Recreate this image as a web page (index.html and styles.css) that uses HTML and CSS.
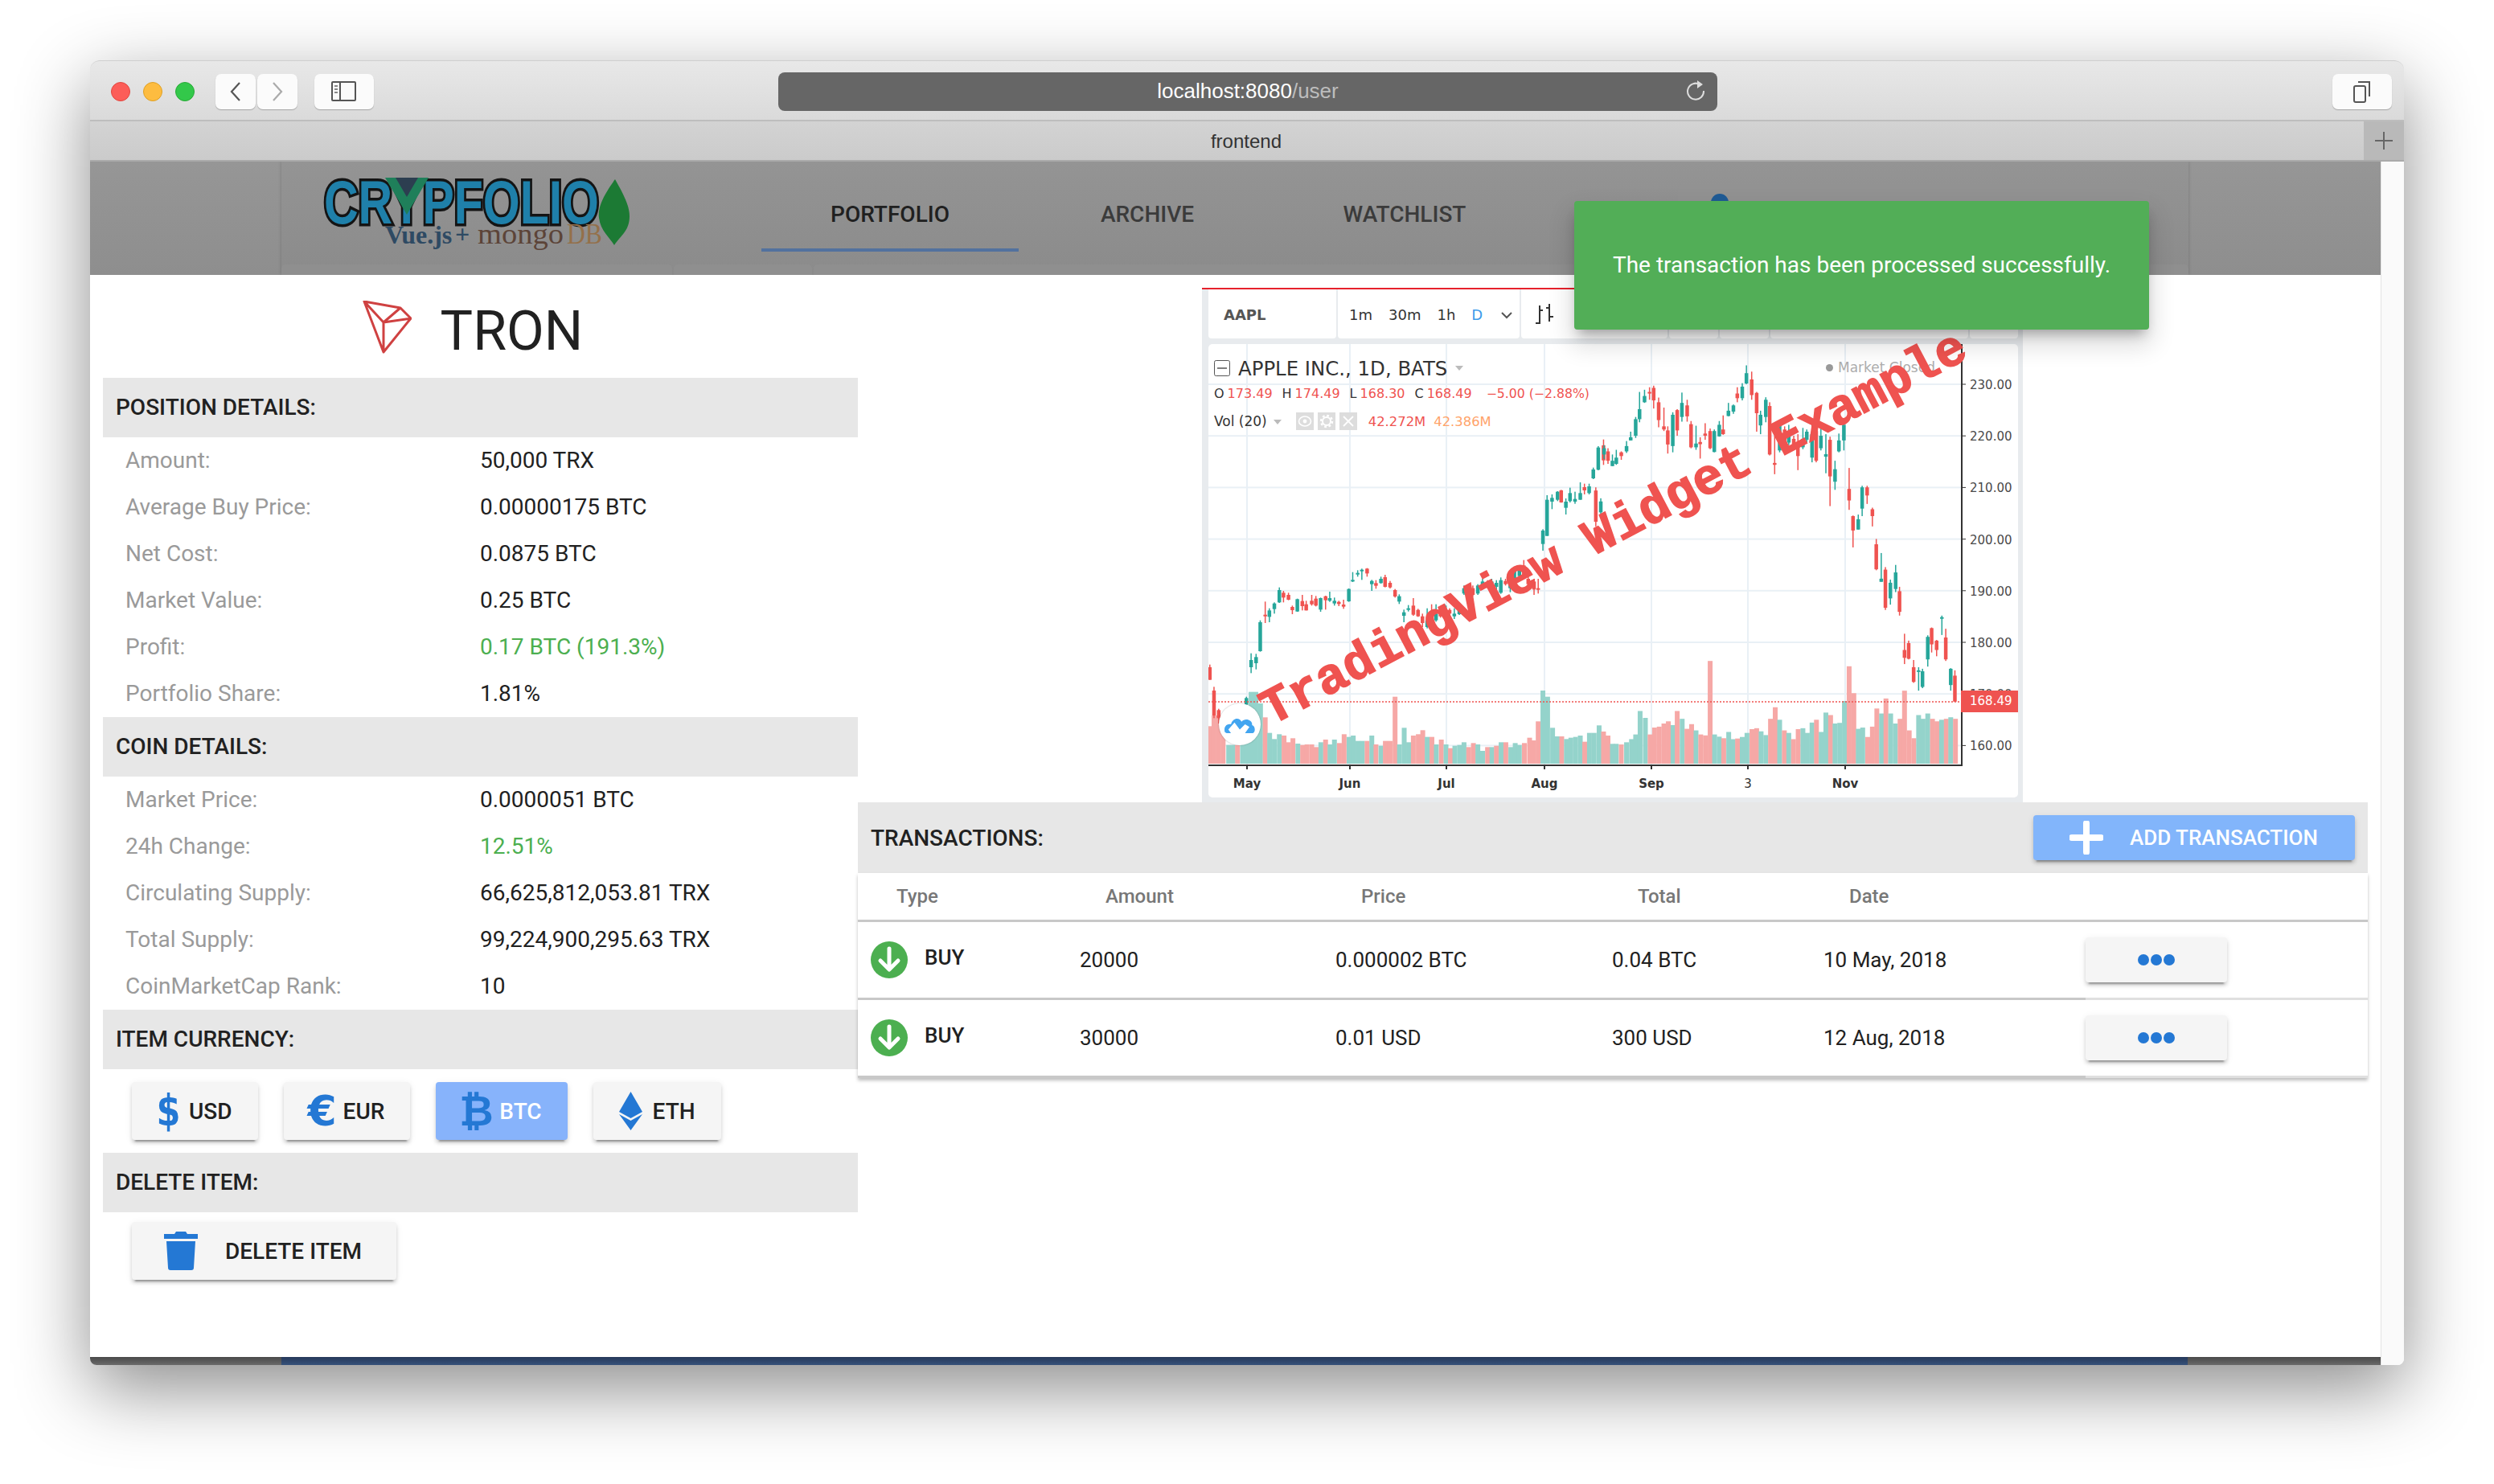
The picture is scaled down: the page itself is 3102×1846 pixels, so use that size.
FILE: index.html
```html
<!DOCTYPE html>
<html lang="en">
<head>
  <meta charset="UTF-8">
  <title>frontend</title>
  <link rel="stylesheet" href="styles.css">
</head>
<body>

<div class="window">
  <!-- safari chrome -->
  <div class="titlebar">
    <div class="lights">
      <span class="light red"></span>
      <span class="light yellow"></span>
      <span class="light green"></span>
    </div>
    <div class="tool-pair">
      <div class="tool nav-tool">
        <svg width="18" height="26" viewBox="0 0 18 26"><path d="M14 2 L4 13 L14 24" fill="none" stroke="#555" stroke-width="2.2"/></svg>
      </div>
      <div class="tool nav-tool">
        <svg width="18" height="26" viewBox="0 0 18 26"><path d="M4 2 L14 13 L4 24" fill="none" stroke="#aaa" stroke-width="2.2"/></svg>
      </div>
    </div>
    <div class="tool side-tool">
      <svg width="32" height="26" viewBox="0 0 32 26"><rect x="1" y="1" width="29" height="23" rx="1" fill="none" stroke="#555" stroke-width="2"/><path d="M11 1 V24" stroke="#555" stroke-width="2"/><path d="M4 6 H8 M4 10 H8 M4 14 H8" stroke="#888" stroke-width="2"/></svg>
    </div>
    <div class="urlbar">
      <span class="url"><span class="url-host">localhost:8080</span>/user</span>
      <svg class="reload" width="26" height="28" viewBox="0 0 26 28"><path d="M17 6 A10 10 0 1 0 22 14" fill="none" stroke="#ddd" stroke-width="2"/><path d="M14 1 L21 6 L14 11 Z" fill="#ddd"/></svg>
    </div>
    <div class="tool tabs-tool">
      <svg width="28" height="28" viewBox="0 0 28 28"><rect x="4" y="7" width="14" height="20" rx="2" fill="none" stroke="#555" stroke-width="2"/><path d="M9 2 H23 V20" fill="none" stroke="#555" stroke-width="2"/></svg>
    </div>
  </div>
  <div class="tabbar">
    <span class="tab-title">frontend</span>
    <div class="new-tab">
      <svg width="24" height="24" viewBox="0 0 24 24"><path d="M12 1 V23 M1 12 H23" stroke="#666" stroke-width="2"/></svg>
    </div>
  </div>

  <div class="viewport">
    <div class="app">
      <!-- dimmed app header behind the modal -->
      <div class="app-head">
        <div class="app-card">
          <div class="app-top">
            <svg class="logo" width="392" height="90" viewBox="0 0 392 90">
              <text class="logo-name" x="3" y="57" textLength="342" lengthAdjust="spacingAndGlyphs">CRYPFOLIO</text>
              <path d="M79 0 L133 0 L106 46 Z" fill="#1f7f5a"/>
              <path d="M92 0 L120 0 L106 24 Z" fill="#2c3e50"/>
              <path d="M365 2 C352 20 343 36 345 50 C347 66 358 74 364 84 C372 72 383 66 383 48 C383 34 374 18 365 2 Z" fill="#1c7a34"/>
              <text class="logo-vue" x="79" y="82">Vue.js</text>
              <text class="logo-vue" x="166" y="81">+</text>
              <text class="logo-mongo" x="194" y="82" textLength="107" lengthAdjust="spacingAndGlyphs">mongo</text>
              <text class="logo-db" x="305" y="82" textLength="44" lengthAdjust="spacingAndGlyphs">DB</text>
            </svg>
            <div class="app-nav">
              <div class="app-tab active">PORTFOLIO</div>
              <div class="app-tab">ARCHIVE</div>
              <div class="app-tab">WATCHLIST</div>
            </div>
            <div class="app-account"><span class="account-dot"></span></div>
          </div>
          <div class="app-under">
            <div class="under-card wide"></div>
            <div class="under-card"></div>
            <div class="under-card grow"></div>
          </div>
        </div>
      </div>

      <!-- item modal -->
      <div class="modal">
        <div class="item-col">
          <div class="coin-title">
            <svg class="tron-logo" width="62" height="66" viewBox="0 0 62 66"><path d="M3 1 L48 9 L61 22 L27 64 Z M3 1 L27 27 L27 64 M27 27 L61 22 M27 27 L48 9" fill="none" stroke="#cf4141" stroke-width="3" stroke-linejoin="round"/></svg>
            <span>TRON</span>
          </div>

          <div class="section-head">POSITION DETAILS:</div>
          <div class="info-row"><span class="info-label">Amount:</span><span>50,000 TRX</span></div>
          <div class="info-row"><span class="info-label">Average Buy Price:</span><span>0.00000175 BTC</span></div>
          <div class="info-row"><span class="info-label">Net Cost:</span><span>0.0875 BTC</span></div>
          <div class="info-row"><span class="info-label">Market Value:</span><span>0.25 BTC</span></div>
          <div class="info-row"><span class="info-label">Profit:</span><span class="gain">0.17 BTC (191.3%)</span></div>
          <div class="info-row"><span class="info-label">Portfolio Share:</span><span>1.81%</span></div>

          <div class="section-head">COIN DETAILS:</div>
          <div class="info-row"><span class="info-label">Market Price:</span><span>0.0000051 BTC</span></div>
          <div class="info-row"><span class="info-label">24h Change:</span><span class="gain">12.51%</span></div>
          <div class="info-row"><span class="info-label">Circulating Supply:</span><span>66,625,812,053.81 TRX</span></div>
          <div class="info-row"><span class="info-label">Total Supply:</span><span>99,224,900,295.63 TRX</span></div>
          <div class="info-row"><span class="info-label">CoinMarketCap Rank:</span><span>10</span></div>

          <div class="section-head">ITEM CURRENCY:</div>
          <div class="currency-row">
            <button class="btn"><span class="coin-icon usd">$</span>USD</button>
            <button class="btn"><span class="coin-icon eur">€</span>EUR</button>
            <button class="btn active"><span class="coin-icon btc">₿</span>BTC</button>
            <button class="btn">
              <svg class="eth" width="29" height="48" viewBox="0 0 29 48"><path d="M14.5 0 L29 25 L14.5 33 L0 25 Z M0 28 L14.5 36 L29 28 L14.5 48 Z" fill="#2478d4"/></svg>ETH
            </button>
          </div>

          <div class="section-head">DELETE ITEM:</div>
          <div class="delete-row">
            <button class="btn delete-btn">
              <svg width="42" height="48" viewBox="0 0 42 48"><path d="M15 0 H27 L29 3 H42 V9 H0 V3 H13 Z" fill="#2478d4"/><path d="M3 12 H39 L37 45 Q37 48 34 48 H8 Q5 48 5 45 Z" fill="#2478d4"/></svg>
              DELETE ITEM
            </button>
          </div>
        </div>

        <div class="trade-col">
          <div class="chart-wrap">
            <div class="tv-toolbar">
              <div class="tv-group tv-symbol">AAPL</div>
              <div class="tv-group tv-times">
                <span>1m</span><span>30m</span><span>1h</span><span class="tv-current">D</span>
                <svg width="16" height="10" viewBox="0 0 16 10"><path d="M2 2 L8 8 L14 2" fill="none" stroke="#555" stroke-width="2"/></svg>
              </div>
              <div class="tv-group tv-style">
                <svg width="24" height="28" viewBox="0 0 24 28"><path d="M6 3 V26 M1 25 H6 M6 9 H10 M18 1 V23 M14 6 H18 M18 17 H23" fill="none" stroke="#333" stroke-width="2"/></svg>
                <span class="style-active"></span>
              </div>
              <div class="tv-group tv-blank"></div>
              <div class="tv-group tv-blank"></div>
              <div class="tv-group tv-fill"></div>
              <div class="tv-group tv-last"></div>
            </div>
            <div class="tv-panel">
              <svg id="chart" width="1007" height="564" viewBox="0 0 1007 564"></svg>

              <div class="tv-legend">
                <div class="legend-title">
                  <svg width="20" height="20" viewBox="0 0 20 20"><rect x="0.5" y="0.5" width="19" height="19" rx="2" fill="none" stroke="#555"/><path d="M4 10 H16" stroke="#555" stroke-width="1.5"/></svg>
                  <span>APPLE INC., 1D, BATS</span>
                  <span class="caret"></span>
                </div>
                <div class="legend-ohlc">
                  <span>O<em>173.49</em></span>
                  <span>H<em>174.49</em></span>
                  <span>L<em>168.30</em></span>
                  <span>C<em>168.49</em></span>
                  <span class="legend-change"><em>−5.00 (−2.88%)</em></span>
                </div>
                <div class="legend-vol">
                  <span>Vol (20)</span>
                  <span class="caret small"></span>
                  <span class="vol-tools">
                    <span class="vol-tool">
                      <svg width="22" height="22" viewBox="0 0 22 22"><ellipse cx="11" cy="11" rx="7.5" ry="6" fill="none" stroke="#fff" stroke-width="1.6"/><circle cx="11" cy="11" r="2.4" fill="#fff"/></svg>
                    </span>
                    <span class="vol-tool">
                      <svg width="22" height="22" viewBox="0 0 22 22"><circle cx="11" cy="11" r="5" fill="none" stroke="#fff" stroke-width="2"/><circle cx="11" cy="11" r="7" fill="none" stroke="#fff" stroke-width="2.4" stroke-dasharray="2.8 2.7"/></svg>
                    </span>
                    <span class="vol-tool">
                      <svg width="22" height="22" viewBox="0 0 22 22"><path d="M5 5 L17 17 M17 5 L5 17" stroke="#fff" stroke-width="1.8"/></svg>
                    </span>
                  </span>
                  <em>42.272M</em>
                  <em class="orange">42.386M</em>
                </div>
              </div>

              <div class="market-state"><span class="state-dot"></span>Market Closed</div>
              <div class="price-tag">168.49</div>
              <div class="watermark">TradingView Widget Example</div>
              <div class="tv-badge">
                <svg width="40" height="24" viewBox="0 0 36 22"><path d="M1 20 C-1 13 4 10 8 11 C10 3 18 3 20 8 C24 3 33 6 32 12 C36 13 36 20 33 21 L24 21 L29 14 L24 11 L18 17 L12 9 L5 17 L8 21 L3 21 Z" fill="#42a5f0"/></svg>
              </div>
            </div>
          </div>

          <div class="section-head trade-head">
            <span>TRANSACTIONS:</span>
            <button class="btn add-btn">
              <svg width="42" height="42" viewBox="0 0 42 42"><path d="M21 3 V39 M3 21 H39" stroke="#fff" stroke-width="8" stroke-linecap="round"/></svg>
              ADD TRANSACTION
            </button>
          </div>

          <table class="trade-table">
            <colgroup>
              <col class="col-type"><col class="col-amount"><col class="col-price"><col class="col-total"><col class="col-date"><col>
            </colgroup>
            <thead>
              <tr>
                <th class="th-type">Type</th>
                <th>Amount</th>
                <th>Price</th>
                <th>Total</th>
                <th>Date</th>
                <th></th>
              </tr>
            </thead>
            <tbody>
              <tr>
                <td>
                  <div class="type-cell">
                    <svg width="46" height="46" viewBox="0 0 46 46"><circle cx="23" cy="23" r="23" fill="#4caf50"/><path d="M23 9 V33 M12 24 L23 35 L34 24" fill="none" stroke="#fff" stroke-width="5" stroke-linecap="round" stroke-linejoin="round"/></svg>
                    <span class="type-name">BUY</span>
                  </div>
                </td>
                <td>20000</td>
                <td>0.000002 BTC</td>
                <td>0.04 BTC</td>
                <td>10 May, 2018</td>
                <td><button class="btn more-btn"><i></i><i></i><i></i></button></td>
              </tr>
              <tr>
                <td>
                  <div class="type-cell">
                    <svg width="46" height="46" viewBox="0 0 46 46"><circle cx="23" cy="23" r="23" fill="#4caf50"/><path d="M23 9 V33 M12 24 L23 35 L34 24" fill="none" stroke="#fff" stroke-width="5" stroke-linecap="round" stroke-linejoin="round"/></svg>
                    <span class="type-name">BUY</span>
                  </div>
                </td>
                <td>30000</td>
                <td>0.01 USD</td>
                <td>300 USD</td>
                <td>12 Aug, 2018</td>
                <td><button class="btn more-btn"><i></i><i></i><i></i></button></td>
              </tr>
            </tbody>
          </table>
        </div>
      </div>

      <div class="app-foot"><div class="foot-blue"></div></div>
    </div>
    <div class="scrollbar"></div>
  </div>

  <div class="toast">The transaction has been processed successfully.</div>
</div>

<script src="chart.js"></script>
</body>
</html>
```

FILE: styles.css
```css
* {
  box-sizing: border-box;
}
html, body {
  height: 100%;
}
body {
  margin: 0;
  padding: 75px 0 0 112px;
  background-color: #fff;
  font-family: Roboto, "Liberation Sans", sans-serif;
  font-size: 28px;
  color: #212121;
  overflow: hidden;
}

/* browser window */
.window {
  position: relative;
  width: 2878px;
  height: 1623px;
  display: flex;
  flex-direction: column;
  border-radius: 12px 12px 8px 8px;
  box-shadow: 0 30px 90px rgba(0, 0, 0, 0.45);
}
.titlebar {
  position: relative;
  height: 76px;
  display: flex;
  align-items: center;
  padding: 2px 0 0 26px;
  background: linear-gradient(#e8e8e8, #dadada);
  border-top: 1px solid #cfcfcf;
  border-bottom: 2px solid #bdbdbd;
  border-radius: 12px 12px 0 0;
}
.lights {
  display: flex;
  gap: 16px;
  margin-right: 26px;
}
.light {
  width: 24px;
  height: 24px;
  border-radius: 50%;
}
.light.red { background-color: #fc5d58; border: 1px solid #e2463f; }
.light.yellow { background-color: #fdbc40; border: 1px solid #dfa023; }
.light.green { background-color: #33c84a; border: 1px solid #27aa35; }
.tool {
  height: 44px;
  display: flex;
  align-items: center;
  justify-content: center;
  background-color: #fbfbfb;
  border-radius: 7px;
  box-shadow: 0 1px 1px rgba(0, 0, 0, 0.25);
}
.tool-pair {
  display: flex;
  gap: 2px;
}
.nav-tool {
  width: 50px;
}
.side-tool {
  width: 74px;
  margin-left: 21px;
}
.urlbar {
  position: relative;
  width: 1168px;
  height: 48px;
  margin-left: 503px;
  display: flex;
  align-items: center;
  justify-content: center;
  background-color: #666;
  border-radius: 8px;
  font-family: "Liberation Sans", Arial, sans-serif;
  font-size: 26px;
  color: #bdbdbd;
}
.url-host {
  color: #fff;
}
.reload {
  position: absolute;
  right: 13px;
  top: 9px;
}
.tabs-tool {
  width: 74px;
  margin-left: 765px;
}
.tabbar {
  position: relative;
  height: 50px;
  display: flex;
  align-items: center;
  justify-content: center;
  padding-top: 1px;
  background: linear-gradient(#d3d3d3, #cbcbcb);
  border-bottom: 2px solid #aaa;
  font-family: "Liberation Sans", Arial, sans-serif;
  font-size: 24px;
  color: #333;
}
.tab-title {
  margin-right: 2px;
}
.new-tab {
  position: absolute;
  right: 0;
  top: 0;
  width: 50px;
  height: 48px;
  display: flex;
  align-items: center;
  justify-content: center;
  background-color: #b9b9b9;
}

.viewport {
  flex: 1;
  min-height: 0;
  display: flex;
}
.app {
  width: 2849px;
  display: flex;
  flex-direction: column;
}
.scrollbar {
  flex: 1;
  background-color: #fafafa;
  border-left: 1px solid #e4e4e4;
  border-bottom-right-radius: 8px;
}

/* dimmed app behind modal */
.app-head {
  height: 141px;
  padding: 0 239px 0 238px;
  background: linear-gradient(#969696, #8e8e8e);
}
.app-card {
  height: 141px;
  background: linear-gradient(#949494, #8b8b8b);
  box-shadow: 0 0 4px rgba(0, 0, 0, 0.2);
}
.app-top {
  height: 128px;
  display: flex;
}
.logo {
  margin: 20px 0 0 50px;
}
.logo-name {
  font-family: "Liberation Sans", Arial, sans-serif;
  font-weight: 700;
  font-size: 76px;
  fill: #1f80aa;
  stroke: #141414;
  stroke-width: 7px;
  paint-order: stroke;
}
.logo-vue, .logo-mongo, .logo-db {
  font-family: "Liberation Serif", serif;
}
.logo-vue {
  font-weight: 700;
  font-size: 32px;
  fill: #2e4a63;
}
.logo-mongo {
  font-size: 36px;
  fill: #5c4438;
}
.logo-db {
  font-size: 36px;
  fill: #94704a;
}
.app-nav {
  display: flex;
  margin-left: 155px;
}
.app-tab {
  width: 320px;
  height: 112px;
  padding-top: 49px;
  text-align: center;
  font-weight: 500;
  color: #3b3b3b;
}
.app-tab.active {
  color: #202020;
  border-bottom: 4px solid #52719e;
}
.app-account {
  width: 586px;
  margin: 28px 0 0 180px;
  padding: 12px 0 0 41px;
  background-color: #929292;
  border-radius: 6px 6px 0 0;
}
.account-dot {
  display: block;
  width: 22px;
  height: 22px;
  border-radius: 50%;
  background-color: #1f5b95;
}
.app-under {
  display: flex;
  gap: 2px;
}
.under-card {
  width: 172px;
  height: 13px;
  background-color: #8f8f8f;
  border-radius: 5px 5px 0 0;
}
.under-card.wide {
  width: 486px;
}
.under-card.grow {
  flex: 1;
}

/* modal */
.modal {
  flex: 1;
  min-height: 0;
  display: flex;
  padding: 0 16px;
  background-color: #fff;
  border-radius: 6px 6px 0 0;
}
.item-col {
  width: 939px;
}
.coin-title {
  height: 128px;
  display: flex;
  align-items: center;
  justify-content: center;
  gap: 36px;
  padding: 12px 20px 0 0;
  font-size: 68px;
  line-height: 1;
}
.tron-logo {
  margin-top: -10px;
}
.section-head {
  height: 74px;
  display: flex;
  align-items: center;
  padding: 0 0 2px 16px;
  background-color: #e7e7e7;
  font-weight: 500;
}
.info-row {
  height: 58px;
  display: flex;
  align-items: center;
  padding: 0 0 2px 28px;
}
.info-label {
  width: 441px;
  color: #9a9a9a;
}
.gain {
  color: #4caf50;
}
.btn {
  height: 72px;
  display: flex;
  align-items: center;
  padding: 0 32px;
  border: 0;
  border-radius: 4px;
  background-color: #f5f5f5;
  font-family: inherit;
  font-size: 28px;
  font-weight: 500;
  color: #212121;
  box-shadow: 0 6px 2px -4px rgba(0, 0, 0, 0.3), 0 4px 4px rgba(0, 0, 0, 0.14), 0 2px 10px rgba(0, 0, 0, 0.08);
}
.btn.active {
  background-color: #87b3fb;
  color: #fff;
}
.currency-row {
  display: flex;
  gap: 32px;
  padding: 16px 36px;
}
.coin-icon {
  margin-right: 12px;
  font-family: "DejaVu Sans", sans-serif;
  font-weight: 700;
  font-size: 52px;
  line-height: 1;
  color: #2478d4;
}
.coin-icon.usd {
  width: 27px;
  font-size: 54px;
  text-align: center;
  transform: scaleX(0.8);
  display: flex;
  justify-content: center;
}
.coin-icon.eur {
  width: 32px;
  margin-right: 10px;
  display: flex;
  justify-content: center;
}
.coin-icon.btc {
  width: 36px;
  margin-right: 11px;
  display: flex;
  justify-content: center;
}
.eth {
  margin-right: 13px;
}
.delete-row {
  display: flex;
  padding: 12px 36px;
}
.delete-btn {
  padding: 0 43px 0 40px;
}
.delete-btn svg {
  margin-right: 34px;
}

/* chart + transactions */
.trade-col {
  flex: 1;
  min-width: 0;
}
.chart-wrap {
  width: 1021px;
  height: 640px;
  margin: 16px 0 0 428px;
  padding: 0 6px 6px 8px;
  background-color: #e8ebee;
  border-top: 2px solid #e6212c;
}
.tv-toolbar {
  height: 61px;
  display: flex;
  gap: 2px;
  font-family: "DejaVu Sans", sans-serif;
  font-size: 18px;
}
.tv-group {
  display: flex;
  align-items: center;
  height: 61px;
  background-color: #fff;
  border-radius: 0 0 4px 4px;
}
.tv-symbol {
  width: 159px;
  padding: 2px 0 0 19px;
  font-weight: 700;
  color: #555;
}
.tv-times {
  width: 226px;
  padding: 2px 0 0 14px;
  gap: 20px;
  color: #333;
}
.tv-current {
  color: #3d9bea;
}
.tv-times svg {
  margin-left: 2px;
}
.tv-style {
  width: 182px;
  padding-left: 17px;
}
.style-active {
  width: 3px;
  height: 16px;
  margin: 2px 0 0 25px;
  background-color: #3d9bea;
}
.tv-blank {
  width: 61px;
}
.tv-fill {
  flex: 1;
}
.tv-last {
  width: 60px;
}
.tv-panel {
  position: relative;
  width: 1007px;
  height: 564px;
  margin-top: 7px;
  background-color: #fff;
  border-radius: 5px;
  font-family: "DejaVu Sans", sans-serif;
}
#chart {
  display: block;
}
.tv-legend {
  position: absolute;
  left: 7px;
  top: 18px;
  color: #333;
}
.tv-legend em {
  font-style: normal;
  color: #ef5350;
}
.legend-title {
  display: flex;
  align-items: center;
  gap: 10px;
  height: 24px;
  font-size: 24.4px;
}
.caret {
  width: 0;
  height: 0;
  border: 5px solid transparent;
  border-top: 6px solid #bbb;
  border-bottom: 0;
}
.legend-ohlc {
  display: flex;
  gap: 12px;
  margin-top: 10px;
  height: 20px;
  font-size: 16px;
  line-height: 20px;
}
.legend-ohlc em {
  margin-left: 4px;
}
.legend-change {
  margin-left: 6px;
}
.legend-change em {
  margin-left: 0;
  font-size: 15.7px;
}
.legend-vol {
  display: flex;
  align-items: center;
  height: 24px;
  margin-top: 12px;
  font-size: 17px;
}
.legend-vol em {
  margin-left: 10px;
  font-size: 16.4px;
}
.legend-vol .orange {
  color: #ffa36a;
}
.caret.small {
  margin: 2px 0 0 8px;
}
.vol-tools {
  display: flex;
  gap: 5px;
  margin: 0 4px 0 18px;
}
.vol-tool {
  width: 22px;
  height: 22px;
  background-color: #ddd;
}
.vol-tool svg {
  display: block;
}
.market-state {
  position: absolute;
  left: 768px;
  top: 20px;
  display: flex;
  align-items: center;
  gap: 6px;
  font-size: 17px;
  line-height: 18px;
  color: #adadad;
}
.state-dot {
  width: 9px;
  height: 9px;
  border-radius: 50%;
  background-color: #999;
}
.price-tag {
  position: absolute;
  left: 936px;
  top: 431px;
  width: 71px;
  height: 27px;
  padding-left: 11px;
  background-color: #ef5350;
  color: #fff;
  font-size: 15px;
  line-height: 27px;
}
.watermark {
  position: absolute;
  left: 505px;
  top: 231px;
  transform: translate(-50%, -50%) rotate(-27.8deg);
  font-family: "Liberation Mono", monospace;
  font-weight: 700;
  font-size: 63px;
  white-space: nowrap;
  color: #ef5350;
  -webkit-text-stroke: 1.5px #ef5350;
}
.tv-badge {
  position: absolute;
  left: 13px;
  top: 447px;
  width: 52px;
  height: 52px;
  display: flex;
  align-items: center;
  justify-content: center;
  background-color: #fff;
  border-radius: 50%;
  box-shadow: 0 0 2px rgba(0, 0, 0, 0.3);
}

.trade-head {
  height: 88px;
  justify-content: space-between;
  padding: 0 16px 0 16px;
}
.add-btn {
  width: 400px;
  height: 56px;
  padding: 0 0 0 45px;
  background-color: #82b5fb;
  color: #fff;
  font-size: 26px;
}
.add-btn svg {
  margin-right: 33px;
}
.trade-table {
  width: 100%;
  table-layout: fixed;
  border-collapse: collapse;
  font-size: 26px;
  box-shadow: 0 3px 4px rgba(0, 0, 0, 0.25);
}
.col-type { width: 276px; }
.col-amount { width: 318px; }
.col-price { width: 344px; }
.col-total { width: 263px; }
.col-date { width: 326px; }
.trade-table th {
  height: 59px;
  padding: 0 0 0 32px;
  text-align: left;
  font-size: 24px;
  font-weight: 500;
  color: #777;
  border-bottom: 3px solid #c8c8c8;
}
.trade-table th.th-type {
  padding-left: 48px;
}
.trade-table td {
  height: 97px;
  padding: 0;
  border-bottom: 3px solid #c8c8c8;
}
.trade-table td:last-child {
  border-bottom-color: #e0e0e0;
}
.type-cell {
  display: flex;
  align-items: center;
  gap: 21px;
  padding-left: 16px;
}
.type-name {
  font-weight: 500;
  font-size: 26px;
  margin-top: -6px;
}
.more-btn {
  width: 176px;
  height: 56px;
  justify-content: center;
  gap: 2px;
  padding: 0;
}
.more-btn i {
  width: 14px;
  height: 14px;
  border-radius: 50%;
  background-color: #2478d4;
}

.app-foot {
  position: relative;
  height: 10px;
  padding-left: 238px;
  background: linear-gradient(#4a4a4a, #6a6a6a);
  border-radius: 0 0 0 8px;
}
.foot-blue {
  width: 2371px;
  height: 10px;
  background: linear-gradient(#26395a, #36517a);
}

.toast {
  position: absolute;
  left: 1846px;
  top: 175px;
  width: 715px;
  height: 160px;
  display: flex;
  align-items: center;
  justify-content: center;
  padding-bottom: 2px;
  background-color: #52ae57;
  color: #fff;
  border-radius: 4px;
  box-shadow: 0 10px 14px -6px rgba(0, 0, 0, 0.3), 0 16px 30px 4px rgba(0, 0, 0, 0.14);
}
```

FILE: chart.js
```js
// TradingView style chart, values read off the widget at its own scale
const svgNS = 'http://www.w3.org/2000/svg';
const chart = document.getElementById('chart');
const panelX = 1503;
const panelY = 428;

const UP = '#26a69a';
const DOWN = '#ef5350';
const g = 'g';
const r = 'r';

// x, body top, body bottom, wick top, wick bottom, colour
const candleSets = [
  { x0: 1480, sx: 2.904, y0: 660, sy: 3, rows: [
    [72,510,557,500,557,r],[87,597,690,583,700,r],[104,670,700,665,720,r],[204,625,650,620,660,g],
    [221,483,510,458,532,g],[239,472,495,460,518,g],[254,342,450,335,452,g],[272,314,320,265,345,r],
    [287,298,322,290,342,g],[305,272,293,268,310,g],[323,222,268,212,270,g],[338,232,250,225,268,r],
    [356,240,258,232,260,r],[370,285,297,280,312,r],[388,256,302,254,303,g],[406,263,282,240,298,r],
    [420,275,298,262,298,r],[440,262,275,240,280,r],[455,254,280,244,283,r],[472,252,295,250,303,g],
    [490,245,260,243,295,r],[505,252,262,228,266,g],[522,262,272,250,280,g],[538,266,274,262,282,r],
    [555,276,284,258,292,r],[574,218,264,216,266,g],[588,184,190,155,192,g],[606,158,163,148,172,g],
    [621,146,152,142,184,g],[640,142,160,140,172,r],[657,188,200,184,225,g],[672,196,206,185,217,r],
    [690,180,196,172,198,g],[705,174,210,165,212,r],[723,195,212,188,216,r],[741,222,246,218,250,r],
    [756,245,265,238,274,g],[773,305,318,295,342,g],[789,290,295,278,302,g],[807,280,314,252,318,r],
    [824,296,320,292,322,r],[840,320,345,310,360,r],[857,335,360,290,365,g],[873,300,330,275,335,r],
    [889,310,335,275,340,g],[905,290,320,285,325,r],[921,280,305,275,310,g],[938,296,310,290,315,r],
    [955,310,320,290,330,g],[973,290,312,285,315,g],[990,215,235,205,240,g],[1006,225,250,215,255,r],
    [1022,215,240,205,245,r],[1040,205,235,200,240,g],[1057,190,215,180,220,g],[1075,195,210,185,215,r],
    [1090,190,215,180,220,g],[1107,195,210,185,230,g],[1123,185,232,175,236,g],[1140,188,200,180,205,r],
    [1157,180,215,170,230,g],[1172,150,178,140,190,g],[1190,145,170,135,175,g],[1206,130,170,110,180,r],
    [1222,180,200,170,210,r],[1243,190,220,180,240,r],[1258,215,220,180,235,r]
  ]},
  { x0: 1480, sx: 2.904, y0: 350, sy: 3, rows: [
    [1275,930,980,925,1005,g],[1290,815,950,798,950,g],[1308,808,822,795,850,g],[1328,785,815,783,820,g],
    [1341,780,825,778,826,r],[1358,822,845,810,870,g],[1373,790,820,770,825,g],[1391,812,822,785,830,g],
    [1410,790,815,750,815,g],[1425,768,780,755,795,r],[1442,765,790,755,795,g],[1457,702,735,695,738,g],
    [1475,620,703,615,705,g],[1494,612,668,590,685,r]
  ]},
  { x0: 2000, sx: 2.904, y0: 400, sy: 2.57, rows: [
    [-44,540,640,530,655,r],[-26,575,610,565,615,g],[-14,405,425,395,440,g],[0,415,445,405,455,r],
    [16,445,462,425,462,g],[30,435,455,410,458,g],[48,418,430,415,442,r],[67,398,415,382,420,g],
    [82,370,380,352,380,g],[100,312,365,305,372,g],[114,280,312,225,322,g],[132,238,258,218,260,g],
    [150,225,228,210,250,r],[165,212,252,205,278,r],[183,258,315,243,338,r],[202,335,345,275,350,r],
    [216,348,393,335,422,r],[234,298,398,290,418,g],[250,283,348,280,365,r],[267,260,305,227,320,g],
    [286,268,303,250,320,r],[300,328,402,318,405,r],[318,390,402,333,410,g],[333,385,392,370,438,r],
    [351,358,365,325,378,r],[369,350,405,342,408,r],[384,350,417,345,418,g],[402,330,367,318,368,g],
    [416,345,360,300,362,r],[435,285,302,260,303,g],[453,268,288,265,295,g],[467,230,245,210,258,r],
    [485,208,245,197,252,g],[500,165,198,140,200,g],[519,185,235,160,250,r],[537,228,293,225,352,r],
    [551,298,332,285,360,g],[570,250,305,242,322,g],[584,270,425,258,428,r],[602,452,458,365,488,r],
    [620,330,412,320,418,g],[638,345,380,335,390,r],[653,360,387,330,395,g],[671,375,395,365,400,r],
    [686,400,430,360,475,r],[704,375,402,340,408,g],[718,352,378,345,385,g],[737,360,435,310,450,g],
    [752,350,445,345,450,r],[769,365,405,335,412,g],[787,424,432,360,485,g],[802,378,495,368,590,r],
    [820,472,512,445,538,g],[834,380,415,358,418,g],[852,330,380,320,412,g],[871,535,572,468,602,r],
    [885,622,668,620,722,r],[904,632,665,617,665,g],[918,530,598,525,622,g],[936,530,556,525,583,r],
    [955,600,622,595,655,r],[969,712,792,695,795,r],[987,822,832,740,832,g],[1002,793,915,785,922,r],
    [1020,835,885,825,905,g],[1039,802,855,778,865,g],[1053,862,928,848,940,r],[1071,1050,1075,998,1095,r],
    [1086,1028,1078,1020,1080,r],[1104,1105,1152,1082,1155,r],[1122,1115,1120,1105,1180,g],[1136,1118,1168,1110,1172,g],
    [1155,1008,1080,1003,1103,g],[1169,980,1032,978,1058,r],[1187,1020,1050,1018,1070,r],[1206,945,950,940,1002,g],
    [1220,1010,1080,982,1085,r],[1238,1110,1162,1108,1180,g],[1253,1132,1215,1115,1215,r]
  ]}
];

// x, top of the bar, colour
const volumeSets = [
  { x0: 1480, sx: 2.904, y0: 660, sy: 3, rows: [
    [72,730,r],[87,690,r],[104,690,r],[120,730,r],[140,800,g],[156,800,g],[172,800,r],[190,760,g],[206,700,g],[221,602,g],
    [238,602,g],[255,645,g],[272,697,r],[288,755,g],[305,778,g],[323,760,g],[340,765,r],[355,790,r],[372,775,r],[390,795,g],
    [407,800,r],[423,798,r],[440,798,r],[456,808,r],[473,790,g],[490,780,r],[506,798,g],[522,780,g],[540,793,r],[557,760,r],
    [575,770,g],[590,765,g],[607,785,g],[623,785,g],[640,785,r],[657,765,g],[672,798,r],[690,803,g],[706,785,r],[723,785,r],
    [741,620,r],[757,798,g],[774,736,g],[790,790,g],[807,765,r],[825,760,r],[841,745,r],[857,770,g],[874,770,r],[890,798,g],
    [908,780,r],[925,798,g],[941,812,r],[957,803,g],[974,800,g],[990,790,g],[1007,808,r],[1024,793,r],[1040,798,g],[1057,822,g],
    [1075,808,r],[1091,808,g],[1107,803,r],[1124,790,g],[1141,790,r],[1159,808,g],[1175,793,g],[1190,800,g],[1208,793,r],[1227,773,r],
    [1242,783,r],[1258,712,r],[1275,597,g],[1292,620,g],[1310,736,g],[1327,768,g],[1343,768,r],[1360,778,g],[1376,773,g],[1393,770,g],
    [1410,765,g],[1426,788,r],[1443,755,g],[1460,755,g],[1478,727,g],[1494,750,r],[1510,765,r]
  ]},
  { x0: 2000, sx: 2.904, y0: 400, sy: 2.57, rows: [
    [0,1325,r],[16,1350,g],[30,1350,g],[48,1352,r],[67,1345,g],[85,1335,g],[100,1320,g],[116,1245,g],[135,1267,g],[152,1320,r],
    [168,1298,r],[185,1295,r],[202,1285,r],[218,1278,r],[235,1290,g],[250,1245,r],[268,1270,g],[285,1302,r],[302,1287,r],[318,1307,g],
    [335,1320,r],[352,1323,r],[369,1085,r],[385,1320,g],[402,1327,g],[418,1332,r],[436,1312,g],[452,1335,g],[468,1333,r],[485,1328,g],
    [502,1315,g],[520,1303,r],[537,1300,r],[553,1310,g],[570,1322,g],[587,1270,r],[604,1233,r],[620,1273,g],[637,1307,r],[653,1315,g],
    [670,1335,r],[687,1303,r],[704,1300,g],[720,1315,g],[737,1282,g],[753,1273,r],[770,1312,g],[787,1250,g],[804,1258,r],[820,1285,g],
    [837,1283,g],[854,1213,g],[871,1102,r],[888,1188,r],[904,1302,g],[920,1298,g],[938,1328,r],[955,1295,r],[971,1237,r],[988,1253,g],
    [1004,1205,r],[1021,1253,g],[1038,1285,g],[1055,1270,r],[1071,1180,r],[1088,1307,r],[1105,1332,r],[1122,1258,g],[1138,1270,g],[1155,1253,g],
    [1172,1270,r],[1188,1278,r],[1205,1273,g],[1222,1270,r],[1238,1265,g],[1255,1270,r]
  ]}
];

const gridX = [1551, 1679, 1799, 1921, 2054, 2174, 2295];
const months = ['May', 'Jun', 'Jul', 'Aug', 'Sep', '3', 'Nov'];
const prices = [230, 220, 210, 200, 190, 180, 170, 160];

const axisX = 2439 - panelX;
const axisY = 952 - panelY;
const baseY = 950 - panelY;

function add(tag, attrs, text) {
  const el = document.createElementNS(svgNS, tag);
  for (const key in attrs) {
    el.setAttribute(key, attrs[key]);
  }
  if (text) el.textContent = text;
  chart.appendChild(el);
  return el;
}

function priceY(p) {
  return 478 + (230 - p) * 6.42 - panelY;
}

function drawGrid() {
  prices.forEach(p => {
    const y = priceY(p);
    add('rect', { x: 0, y: y - 1, width: axisX, height: 2, fill: '#e9f0f6' });
  });
  gridX.forEach(x => {
    add('rect', { x: x - panelX - 1, y: 0, width: 2, height: axisY, fill: '#e9f0f6' });
  });
}

function drawVolumes() {
  volumeSets.forEach(set => {
    set.rows.forEach(row => {
      const x = set.x0 + row[0] / set.sx - panelX;
      const top = set.y0 + row[1] / set.sy - panelY;
      add('rect', {
        x: x - 3, y: top, width: 6, height: baseY - top,
        fill: row[2] === g ? '#94d3cb' : '#f6a8a6'
      });
    });
  });
}

function drawCandles() {
  candleSets.forEach(set => {
    set.rows.forEach(row => {
      const x = set.x0 + row[0] / set.sx - panelX;
      const yy = i => set.y0 + row[i] / set.sy - panelY;
      const colour = row[5] === g ? UP : DOWN;
      add('rect', { x: x - 0.75, y: yy(3), width: 1.5, height: yy(4) - yy(3), fill: colour });
      add('rect', { x: x - 2.25, y: yy(1), width: 4.5, height: Math.max(yy(2) - yy(1), 2), fill: colour });
    });
  });
}

function drawAxes() {
  const lastY = priceY(168.49);
  add('line', { x1: 0, x2: axisX, y1: lastY, y2: lastY, stroke: '#ef5350', 'stroke-width': 1.5, 'stroke-dasharray': '2 2' });
  add('rect', { x: 0, y: axisY - 1, width: axisX + 2, height: 2, fill: '#333' });
  add('rect', { x: axisX, y: 0, width: 2, height: axisY, fill: '#333' });

  prices.forEach(p => {
    const y = priceY(p);
    add('rect', { x: axisX + 2, y: y - 0.5, width: 4, height: 1, fill: '#333' });
    add('text', { x: 947, y: y + 6, fill: '#4a4a4a', 'font-size': 15, 'font-family': 'DejaVu Sans' }, p + '.00');
  });

  gridX.forEach((x, i) => {
    add('rect', { x: x - panelX - 1, y: axisY + 1, width: 2, height: 4, fill: '#333' });
    add('text', {
      x: x - panelX, y: 552, fill: '#333', 'font-size': 15, 'font-family': 'DejaVu Sans',
      'font-weight': months[i] === '3' ? 400 : 700, 'text-anchor': 'middle'
    }, months[i]);
  });
}

drawGrid();
drawVolumes();
drawCandles();
drawAxes();
```
